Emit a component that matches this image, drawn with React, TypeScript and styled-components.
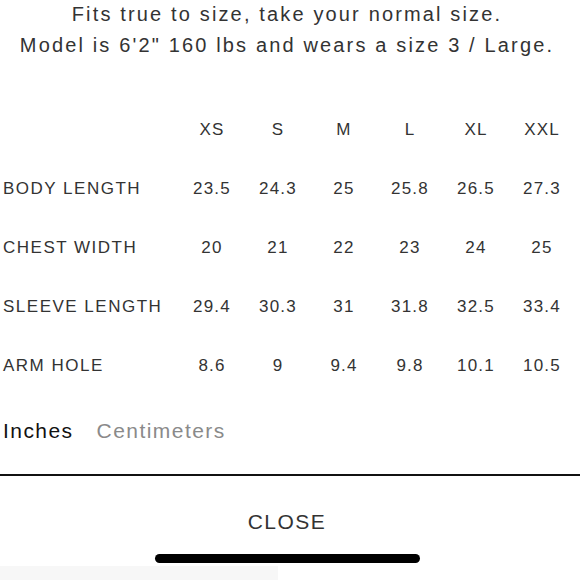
import React from 'react';
import styled, { createGlobalStyle } from 'styled-components';

const GlobalStyle = createGlobalStyle`
    html, body {
        margin: 0;
        padding: 0;
        background: #ffffff;
    }
    body {
        font-family: 'Liberation Sans', Arial, sans-serif;
        color: #333333;
    }
`;

const Sheet = styled.div`
    width: 580px;
    height: 580px;
    overflow: hidden;
    display: flex;
    flex-direction: column;
`;

const Note = styled.div`
    text-align: center;
    font-size: 20px;
    line-height: 31px;
    letter-spacing: 2.15px;
    color: #333;
    margin-top: -1px;
    padding-right: 6px;
`;

const Table = styled.div`
    display: grid;
    grid-template-columns: 179px repeat(6, 66px);
    grid-auto-rows: 59px;
    margin-top: 39px;
`;

const Cell = styled.div<{ $label?: boolean }>`
    display: flex;
    align-items: center;
    justify-content: ${(props) => (props.$label ? 'flex-start' : 'center')};
    padding-left: ${(props) => (props.$label ? '3px' : '0')};
    font-size: 17px;
    letter-spacing: ${(props) => (props.$label ? '1.5px' : '1.2px')};
    color: #333;
    white-space: nowrap;
`;

const Units = styled.div`
    display: flex;
    gap: 23px;
    padding: 0 0 0 3px;
    height: 40px;
    align-items: center;
    margin-top: 17px;
`;

const Unit = styled.span<{ $active?: boolean }>`
    font-size: 21px;
    letter-spacing: 1.45px;
    color: ${(props) => (props.$active ? '#111' : '#8a8a8a')};
`;

const Divider = styled.div`
    height: 2px;
    background: #111;
    margin-top: 23px;
`;

const Close = styled.div`
    text-align: center;
    font-size: 21px;
    letter-spacing: 1.5px;
    color: #333;
    margin-top: 35px;
    line-height: 22px;
    padding-right: 6px;
`;

const HomeBar = styled.div`
    width: 265px;
    height: 10px;
    border-radius: 5px;
    background: #000;
    margin: 21px 0 0 155px;
`;

const Strip = styled.div`
    width: 278px;
    height: 14px;
    background: #f7f7f7;
    margin-top: 3px;
`;

const sizes = ['XS', 'S', 'M', 'L', 'XL', 'XXL'];

const rows: { name: string; values: string[] }[] = [
    { name: 'BODY LENGTH', values: ['23.5', '24.3', '25', '25.8', '26.5', '27.3'] },
    { name: 'CHEST WIDTH', values: ['20', '21', '22', '23', '24', '25'] },
    { name: 'SLEEVE LENGTH', values: ['29.4', '30.3', '31', '31.8', '32.5', '33.4'] },
    { name: 'ARM HOLE', values: ['8.6', '9', '9.4', '9.8', '10.1', '10.5'] },
];

const App = (): JSX.Element => {
    return (
        <Sheet>
            <GlobalStyle />
            <Note>
                Fits true to size, take your normal size.
                <br />
                Model is 6'2" 160 lbs and wears a size 3 / Large.
            </Note>
            <Table>
                <Cell $label />
                {sizes.map((s) => (
                    <Cell key={s}>{s}</Cell>
                ))}
                {rows.map((row) => (
                    <React.Fragment key={row.name}>
                        <Cell $label>{row.name}</Cell>
                        {row.values.map((v, i) => (
                            <Cell key={i}>{v}</Cell>
                        ))}
                    </React.Fragment>
                ))}
            </Table>
            <Units>
                <Unit $active>Inches</Unit>
                <Unit>Centimeters</Unit>
            </Units>
            <Divider />
            <Close>CLOSE</Close>
            <HomeBar />
            <Strip />
        </Sheet>
    );
};

export default App;
